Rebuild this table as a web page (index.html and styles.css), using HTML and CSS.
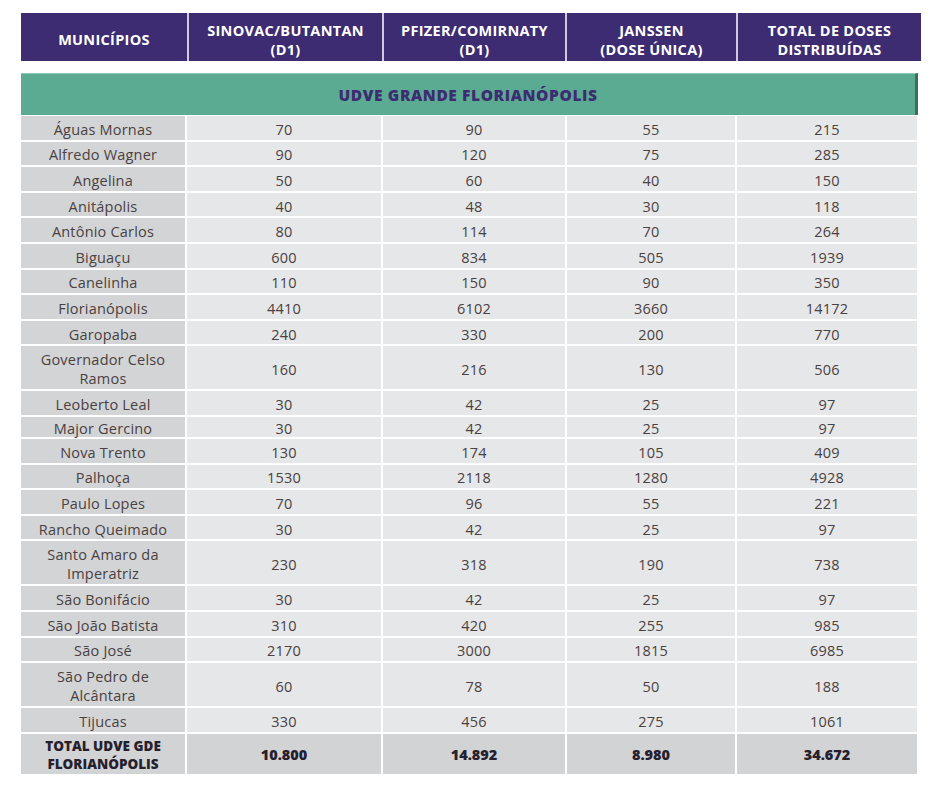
FILE: index.html
```html
<!DOCTYPE html>
<html lang="pt-BR">
<head>
<meta charset="utf-8">
<title>UDVE Grande Florianópolis</title>
<link rel="stylesheet" href="styles.css">
</head>
<body>
<div class="page">
  <table class="head">
    <colgroup><col class="h1"><col class="h2"><col class="h3"><col class="h4"><col class="h5"></colgroup>
    <tr>
      <th>MUNICÍPIOS</th>
      <th>SINOVAC/BUTANTAN<br>(D1)</th>
      <th>PFIZER/COMIRNATY<br>(D1)</th>
      <th>JANSSEN<br>(DOSE ÚNICA)</th>
      <th>TOTAL DE DOSES<br>DISTRIBUÍDAS</th>
    </tr>
  </table>
  <div class="region">UDVE GRANDE FLORIANÓPOLIS</div>
  <table class="data">
    <colgroup><col class="d1"><col class="d2"><col class="d3"><col class="d4"><col class="d5"></colgroup>
    <tbody>
      <tr><th>Águas Mornas</th><td>70</td><td>90</td><td>55</td><td>215</td></tr>
      <tr><th>Alfredo Wagner</th><td>90</td><td>120</td><td>75</td><td>285</td></tr>
      <tr><th>Angelina</th><td>50</td><td>60</td><td>40</td><td>150</td></tr>
      <tr><th>Anitápolis</th><td>40</td><td>48</td><td>30</td><td>118</td></tr>
      <tr><th>Antônio Carlos</th><td>80</td><td>114</td><td>70</td><td>264</td></tr>
      <tr><th>Biguaçu</th><td>600</td><td>834</td><td>505</td><td>1939</td></tr>
      <tr><th>Canelinha</th><td>110</td><td>150</td><td>90</td><td>350</td></tr>
      <tr><th>Florianópolis</th><td>4410</td><td>6102</td><td>3660</td><td>14172</td></tr>
      <tr><th>Garopaba</th><td>240</td><td>330</td><td>200</td><td>770</td></tr>
      <tr class="tall"><th>Governador Celso<br>Ramos</th><td>160</td><td>216</td><td>130</td><td>506</td></tr>
      <tr><th>Leoberto Leal</th><td>30</td><td>42</td><td>25</td><td>97</td></tr>
      <tr class="short"><th>Major Gercino</th><td>30</td><td>42</td><td>25</td><td>97</td></tr>
      <tr><th>Nova Trento</th><td>130</td><td>174</td><td>105</td><td>409</td></tr>
      <tr><th>Palhoça</th><td>1530</td><td>2118</td><td>1280</td><td>4928</td></tr>
      <tr><th>Paulo Lopes</th><td>70</td><td>96</td><td>55</td><td>221</td></tr>
      <tr><th>Rancho Queimado</th><td>30</td><td>42</td><td>25</td><td>97</td></tr>
      <tr class="tall"><th>Santo Amaro da<br>Imperatriz</th><td>230</td><td>318</td><td>190</td><td>738</td></tr>
      <tr><th>São Bonifácio</th><td>30</td><td>42</td><td>25</td><td>97</td></tr>
      <tr><th>São João Batista</th><td>310</td><td>420</td><td>255</td><td>985</td></tr>
      <tr><th>São José</th><td>2170</td><td>3000</td><td>1815</td><td>6985</td></tr>
      <tr class="tall"><th>São Pedro de<br>Alcântara</th><td>60</td><td>78</td><td>50</td><td>188</td></tr>
      <tr><th>Tijucas</th><td>330</td><td>456</td><td>275</td><td>1061</td></tr>
      <tr class="total"><th>TOTAL UDVE GDE<br>FLORIANÓPOLIS</th><td>10.800</td><td>14.892</td><td>8.980</td><td>34.672</td></tr>
    </tbody>
  </table>
</div>
</body>
</html>
```
FILE: styles.css
```css
html, body {
  margin: 0;
  padding: 0;
  background: #ffffff;
}

body {
  font-family: "Open Sans", "Liberation Sans", sans-serif;
}

.page {
  padding: 13px 0 0 21px;
  width: 900px;
}

table {
  border-collapse: separate;
  table-layout: fixed;
}

/* header */
.head {
  width: 900px;
  border-spacing: 0;
  background: #3e2c72;
}

.head .h1 { width: 166px; }
.head .h2 { width: 195px; }
.head .h3 { width: 183px; }
.head .h4 { width: 171px; }
.head .h5 { width: 185px; }

.head th {
  height: 43px;
  padding: 5px 0 0;
  color: #ffffff;
  font-size: 14.5px;
  font-weight: 700;
  letter-spacing: 0.3px;
  line-height: 19px;
  text-align: center;
  vertical-align: middle;
  border-left: 2px solid #cfcbdc;
}

.head th:first-child {
  border-left: none;
}

/* region band */
.region {
  margin-top: 12px;
  width: 894px;
  height: 41px;
  background: #5aab92;
  border-top: 1px solid #8cc8b3;
  border-right: 3px solid #3c6d5d;
  color: #3e2c72;
  font-size: 15.5px;
  font-weight: 800;
  letter-spacing: 0.6px;
  line-height: 42px;
  text-align: center;
}

/* data */
.data {
  width: 898px;
  margin-left: -2px;
  margin-top: -1px;
  border-spacing: 2px;
}

.data .d1 { width: 164px; }
.data .d2 { width: 194px; }
.data .d3 { width: 182px; }
.data .d4 { width: 168px; }
.data .d5 { width: 180px; }

.data th,
.data td {
  height: 20.6px;
  padding: 3px 0 0;
  font-size: 14.5px;
  font-weight: 500;
  letter-spacing: 0.2px;
  line-height: 19px;
  text-align: center;
  vertical-align: middle;
  color: #4a4141;
}

.data th {
  background: #d3d4d6;
}

.data td {
  background: #e6e7e8;
}

.data .tall th,
.data .tall td {
  height: 40px;
}

.data .short th,
.data .short td {
  height: 16px;
  line-height: 17px;
}

.data .total th,
.data .total td {
  height: 38px;
  padding-top: 2px;
  background: #d2d3d5;
  color: #261f2e;
  font-weight: 800;
  letter-spacing: 0;
  line-height: 18px;
}

.data .total th {
  font-size: 13.5px;
}
```
